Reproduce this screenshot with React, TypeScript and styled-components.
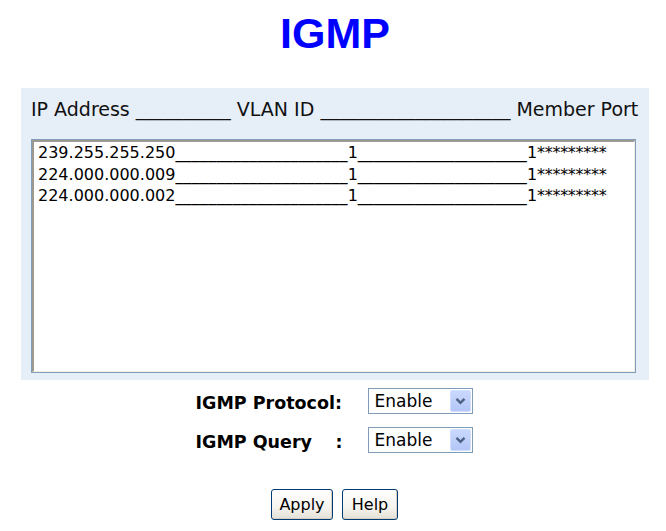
import React, { FC } from 'react';
import styled, { createGlobalStyle } from 'styled-components';

const GlobalStyle = createGlobalStyle`
  html, body {
    margin: 0;
    padding: 0;
    background: #ffffff;
  }
  body {
    font-family: 'DejaVu Sans', Verdana, sans-serif;
    color: #000;
  }
`;

const groups = [
  { ip: '239.255.255.250', vlan: '1', port: '1' },
  { ip: '224.000.000.009', vlan: '1', port: '1' },
  { ip: '224.000.000.002', vlan: '1', port: '1' },
];

const line = (n: number) => '_'.repeat(n);

const Chevron: FC = () => (
  <svg width="11" height="8" viewBox="0 0 11 8">
    <path d="M1.5 1.8 L5.5 5.8 L9.5 1.8" fill="none" stroke="#4d6185" strokeWidth="2.4" />
  </svg>
);

const Select: FC<{ value: string }> = ({ value }) => (
  <SelectBox>
    <SelectText>{value}</SelectText>
    <ArrowButton>
      <Chevron />
    </ArrowButton>
  </SelectBox>
);

const App: FC = () => {
  return (
    <Page>
      <GlobalStyle />
      <Title>IGMP</Title>

      <Panel>
        <HeaderRow>
          {`IP Address ${line(10)} VLAN ID ${line(20)} Member Port`}
        </HeaderRow>
        <ListFrame>
          <ListBox>
            {groups.map((g) => (
              <ListRow key={g.ip}>
                {g.ip}
                <Fill $spacing={0.2}>{line(21)}</Fill>
                {g.vlan}
                <Fill $spacing={0.05}>{line(21)}</Fill>
                {g.port}
                <Stars>*********</Stars>
              </ListRow>
            ))}
          </ListBox>
        </ListFrame>
      </Panel>

      <Settings>
        <Label>IGMP Protocol:</Label>
        <Select value="Enable" />
        <Label>
          <span>IGMP Query</span>
          <span>:</span>
        </Label>
        <Select value="Enable" />
      </Settings>

      <Buttons>
        <Button $w={62}>Apply</Button>
        <Button $w={56}>Help</Button>
      </Buttons>
    </Page>
  );
};

export default App;

const Page = styled.div`
  width: 666px;
  min-height: 531px;
  padding-top: 8px;
  box-sizing: border-box;
`;

const Title = styled.h1`
  margin: 0 0 30px;
  padding-left: 4px;
  font: bold 43px/50px 'Liberation Sans', Arial, sans-serif;
  color: #0000ff;
  text-align: center;
`;

const Panel = styled.div`
  margin-left: 21px;
  width: 628px;
  box-sizing: border-box;
  padding: 10px 13px 7px 10px;
  background: #e6eef7;
`;

const HeaderRow = styled.div`
  font-size: 19px;
  line-height: 22px;
  white-space: pre;
  color: #111;
`;

const ListFrame = styled.div`
  margin-top: 19px;
  width: 605px;
  height: 234px;
  box-sizing: border-box;
  border: 1px solid #7f9db9;
  background: #fff;
`;

const ListBox = styled.div`
  height: 100%;
  box-sizing: border-box;
  border-style: solid;
  border-width: 2px 1px 1px 2px;
  border-color: #9e9a8f #f1efe2 #f1efe2 #9e9a8f;
  padding-left: 4px;
  overflow: hidden;
`;

const ListRow = styled.div`
  font-size: 16px;
  line-height: 21.7px;
  white-space: pre;
`;

const Fill = styled.span<{ $spacing: number }>`
  letter-spacing: ${(p) => p.$spacing}px;
`;

const Stars = styled.span`
  letter-spacing: -0.3px;
`;

const Settings = styled.div`
  margin-top: 8px;
  display: grid;
  grid-template-columns: 147px 105px;
  column-gap: 25px;
  row-gap: 13px;
  justify-content: center;
  align-items: center;
  padding-left: 2px;
`;

const Label = styled.div`
  display: flex;
  justify-content: space-between;
  font-weight: bold;
  font-size: 17.5px;
  padding-top: 3px;
  white-space: nowrap;
`;

const SelectBox = styled.div`
  height: 26px;
  box-sizing: border-box;
  border: 1px solid #7f9db9;
  background: #fff;
  display: flex;
  align-items: center;
  justify-content: space-between;
  padding: 0 1px 0 6px;
`;

const SelectText = styled.span`
  font-size: 17px;
`;

const ArrowButton = styled.div`
  width: 21px;
  height: 22px;
  box-sizing: border-box;
  border: 1px solid #d3defc;
  border-radius: 2px;
  background: linear-gradient(#c9d8fd, #b3c6f6);
  display: flex;
  align-items: center;
  justify-content: center;
`;

const Buttons = styled.div`
  margin-top: 36px;
  display: flex;
  justify-content: center;
  gap: 9px;
  padding-left: 3px;
`;

const Button = styled.button<{ $w: number }>`
  width: ${(p) => p.$w}px;
  height: 31px;
  padding: 0;
  border: 1px solid #003c74;
  border-radius: 3px;
  background: linear-gradient(#ffffff 0%, #f5f4ef 60%, #e3e0d6 100%);
  box-shadow: inset -1px -1px 0 #d6d0c5;
  font-family: 'DejaVu Sans', Verdana, sans-serif;
  font-size: 16px;
  color: #000;
  cursor: pointer;
`;
